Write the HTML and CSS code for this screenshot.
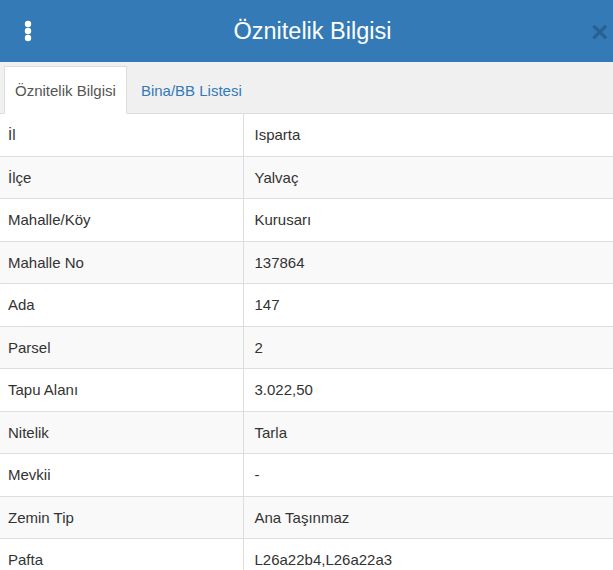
FILE: index.html
```html
<!DOCTYPE html>
<html lang="tr">
<head>
  <meta charset="UTF-8">
  <title>Öznitelik Bilgisi</title>
  <link rel="stylesheet" href="styles.css">
</head>
<body>
  <div class="panel">
    <!-- Başlık -->
    <div class="panel-header">
      <span class="menu-btn">
        <svg width="8" height="22" viewBox="0 0 8 22">
          <circle cx="4" cy="4" r="3.2" fill="#fff"/>
          <circle cx="4" cy="11" r="3.2" fill="#fff"/>
          <circle cx="4" cy="18" r="3.2" fill="#fff"/>
        </svg>
      </span>
      <h1 class="panel-title">Öznitelik Bilgisi</h1>
      <span class="close-btn">&times;</span>
    </div>
    <!-- Sekmeler -->
    <ul class="tabs">
      <li class="tab active">Öznitelik Bilgisi</li>
      <li class="tab">Bina/BB Listesi</li>
    </ul>
    <!-- Tablo -->
    <table class="attr-table">
      <tr><td>İl</td><td>Isparta</td></tr>
      <tr><td>İlçe</td><td>Yalvaç</td></tr>
      <tr><td>Mahalle/Köy</td><td>Kurusarı</td></tr>
      <tr><td>Mahalle No</td><td>137864</td></tr>
      <tr><td>Ada</td><td>147</td></tr>
      <tr><td>Parsel</td><td>2</td></tr>
      <tr><td>Tapu Alanı</td><td>3.022,50</td></tr>
      <tr><td>Nitelik</td><td>Tarla</td></tr>
      <tr><td>Mevkii</td><td>-</td></tr>
      <tr><td>Zemin Tip</td><td>Ana Taşınmaz</td></tr>
      <tr><td>Pafta</td><td>L26a22b4,L26a22a3</td></tr>
    </table>
  </div>
</body>
</html>
```

FILE: styles.css
```css
* {
  box-sizing: border-box;
  margin: 0;
  padding: 0;
}
body {
  font-family: "Liberation Sans", Arial, sans-serif;
  font-size: 15px;
  color: #333;
  background-color: #fff;
  overflow: hidden;
}
.panel {
  width: 613px;
}
.panel-header {
  height: 62px;
  background-color: #337ab7;
  display: flex;
  align-items: center;
  justify-content: space-between;
  padding: 0 0 0 24px;
}
.menu-btn {
  display: flex;
  width: 8px;
}
.panel-title {
  font-size: 23.5px;
  font-weight: normal;
  color: #fff;
  margin-left: 2px;
}
.close-btn {
  font-size: 30px;
  font-weight: bold;
  color: #000;
  opacity: 0.2;
  line-height: 1;
  width: 22px;
  margin-top: 2px;
}
.tabs {
  list-style: none;
  display: flex;
  background-color: #f0f0f0;
  padding: 4px 4px 0;
  border-bottom: 1px solid #ddd;
  height: 52px;
}
.tab {
  padding: 0 9px;
  line-height: 47px;
  color: #337ab7;
  border: 1px solid transparent;
  margin-bottom: -1px;
}
.tab.active {
  color: #555;
  background-color: #fff;
  border-color: #ddd;
  border-bottom-color: #fff;
  padding: 0 10px;
  margin-right: 4px;
}
.attr-table {
  width: 100%;
  border-collapse: collapse;
}
.attr-table td {
  padding: 11.25px 8px 10.25px;
  line-height: 20px;
  border-top: 1px solid #ddd;
  vertical-align: top;
}
.attr-table tr:first-child td {
  border-top: none;
}
.attr-table td:first-child {
  width: 243px;
  border-right: 1px solid #ddd;
}
.attr-table td:last-child {
  padding-left: 11px;
}
.attr-table tr:nth-child(even) td {
  background-color: #f9f9f9;
}
```
